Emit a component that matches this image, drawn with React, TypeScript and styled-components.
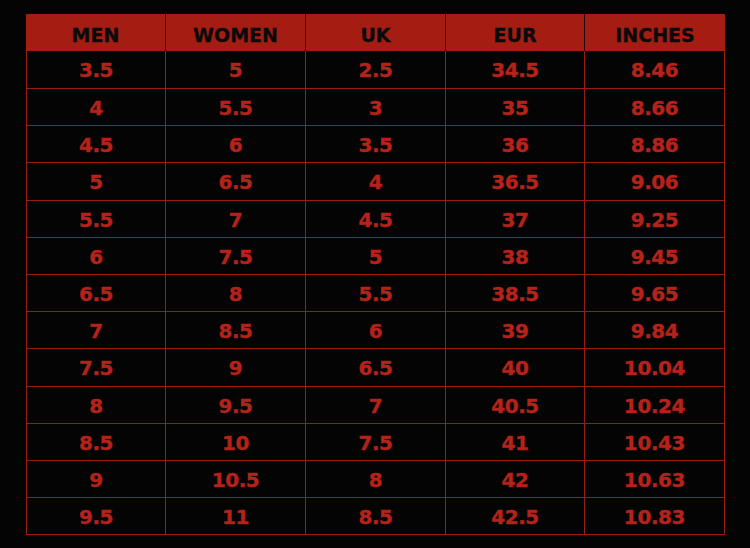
import React from 'react';
import styled, { createGlobalStyle } from 'styled-components';

const headers = ['MEN', 'WOMEN', 'UK', 'EUR', 'INCHES'];

const rows: string[][] = [
  ['3.5', '5', '2.5', '34.5', '8.46'],
  ['4', '5.5', '3', '35', '8.66'],
  ['4.5', '6', '3.5', '36', '8.86'],
  ['5', '6.5', '4', '36.5', '9.06'],
  ['5.5', '7', '4.5', '37', '9.25'],
  ['6', '7.5', '5', '38', '9.45'],
  ['6.5', '8', '5.5', '38.5', '9.65'],
  ['7', '8.5', '6', '39', '9.84'],
  ['7.5', '9', '6.5', '40', '10.04'],
  ['8', '9.5', '7', '40.5', '10.24'],
  ['8.5', '10', '7.5', '41', '10.43'],
  ['9', '10.5', '8', '42', '10.63'],
  ['9.5', '11', '8.5', '42.5', '10.83'],
];

export default function App() {
  return (
    <>
      <GlobalStyle />
      <Page>
        <SizeGrid>
          {headers.map((h, i) => (
            <HeadCell key={h} $last={i === headers.length - 1}>
              {h}
            </HeadCell>
          ))}
          {rows.map((row, r) =>
            row.map((v, c) => (
              <Cell key={`${r}-${c}`} $first={c === 0}>
                {v}
              </Cell>
            ))
          )}
        </SizeGrid>
      </Page>
    </>
  );
}

const GlobalStyle = createGlobalStyle`
  html, body {
    margin: 0;
    padding: 0;
    background: #040404;
  }
`;

const Page = styled.div`
  width: 750px;
  height: 548px;
  padding: 14px 0 0 26px;
  box-sizing: border-box;
  background: #040404;
  font-family: 'DejaVu Sans', 'Liberation Sans', sans-serif;
`;

const SizeGrid = styled.div`
  display: grid;
  width: 699px;
  grid-template-columns: 140px 140px 140px 139px 140px;
  grid-template-rows: 37px 38px 37px 37px 38px 37px 37px 37px 37px 38px 37px 37px 37px 37px;
`;

const HeadCell = styled.div<{ $last?: boolean }>`
  display: flex;
  align-items: center;
  justify-content: center;
  padding-top: 4px;
  box-sizing: border-box;
  background: #a51c13;
  color: #0a0a0a;
  font-size: 19px;
  font-weight: 700;
  -webkit-text-stroke: 0.3px #0a0a0a;
  border-right: ${(p) => (p.$last ? 'none' : '1px solid #1a0503')};
`;

const Cell = styled.div<{ $first?: boolean }>`
  display: flex;
  align-items: center;
  justify-content: center;
  padding-top: 1px;
  box-sizing: border-box;
  color: #b5221a;
  font-size: 20px;
  font-weight: 700;
  letter-spacing: -0.4px;
  -webkit-text-stroke: 0.4px #b5221a;
  border-right: 1px solid #9a1c14;
  border-bottom: 1px solid #9a1c14;
  border-left: ${(p) => (p.$first ? '1px solid #9a1c14' : 'none')};
`;
